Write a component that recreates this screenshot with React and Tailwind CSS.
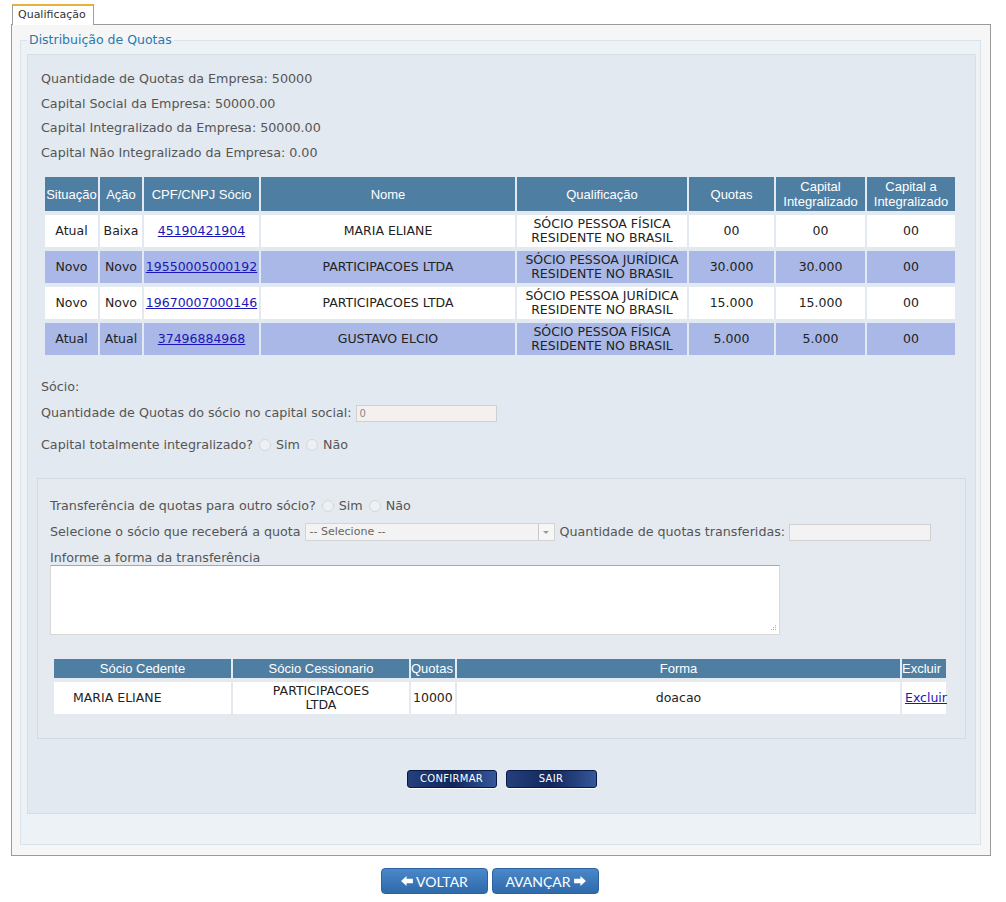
import React from 'react';

const socios = [
  { sit: 'Atual', acao: 'Baixa', doc: '45190421904', nome: 'MARIA ELIANE', q1: 'SÓCIO PESSOA FÍSICA', quotas: '00', integ: '00', aInteg: '00' },
  { sit: 'Novo', acao: 'Novo', doc: '19550005000192', nome: 'PARTICIPACOES LTDA', q1: 'SÓCIO PESSOA JURÍDICA', quotas: '30.000', integ: '30.000', aInteg: '00' },
  { sit: 'Novo', acao: 'Novo', doc: '19670007000146', nome: 'PARTICIPACOES LTDA', q1: 'SÓCIO PESSOA JURÍDICA', quotas: '15.000', integ: '15.000', aInteg: '00' },
  { sit: 'Atual', acao: 'Atual', doc: '37496884968', nome: 'GUSTAVO ELCIO', q1: 'SÓCIO PESSOA FÍSICA', quotas: '5.000', integ: '5.000', aInteg: '00' },
];

const Radio = ({ label }) => (
  <span className="inline-flex items-center ml-[6px]">
    <span className="w-[12px] h-[12px] rounded-full border border-[#d3d8dc] bg-[#eef1f3] mr-[5px]" />
    {label}
  </span>
);

const ArrowLeft = () => (
  <svg width="12" height="10" viewBox="0 0 13 11" className="mr-[3px]">
    <polygon points="0,5.5 6,0 6,3 13,3 13,8 6,8 6,11" fill="#fff" />
  </svg>
);

const ArrowRight = () => (
  <svg width="12" height="10" viewBox="0 0 13 11" className="ml-[3px]">
    <polygon points="13,5.5 7,0 7,3 0,3 0,8 7,8 7,11" fill="#fff" />
  </svg>
);

const th = "bg-[#4f7ea3] text-white font-normal font-['Liberation_Sans',Arial,sans-serif] text-[13px] leading-[15px] text-center px-[1px]";
const td = "text-[12.5px] text-[#222] text-center leading-[14px]";

export default function App() {
  return (
    <div className="w-[1006px] h-[902px] bg-white font-['DejaVu_Sans',Verdana,sans-serif] text-[#555] text-[12.7px] pt-[4px]">
      {/* Tab */}
      <div className="ml-[12px] w-[82px] h-[21px] border-t-2 border-t-[#e8b23a] border-x border-x-[#a0a0a0] bg-white text-[11px] text-[#333] leading-[18px] pl-[5px] relative z-10 -mb-[1px]">
        Qualificação
      </div>

      {/* Panel */}
      <div className="ml-[11px] w-[980px] border border-[#9a9a9a] bg-[#f6f6f6] pt-[7px] pl-[8px] pr-[9px] pb-[10px]">
        <fieldset className="border border-[#dbe3ea] bg-[#edf2f6] pl-[6px] pr-[4px] pt-[6px] pb-[30px]">
          <legend className="px-[2px] text-[12.5px] text-[#2a78ad] leading-[16px]">Distribuição de Quotas</legend>

          {/* Inner box */}
          <div className="bg-[#e2e9f0] border border-[#d6dee6] px-[13px] pt-[12px] pb-[25px]">
            <div className="leading-[24.5px]">
              <div>Quantidade de Quotas da Empresa: 50000</div>
              <div>Capital Social da Empresa: 50000.00</div>
              <div>Capital Integralizado da Empresa: 50000.00</div>
              <div>Capital Não Integralizado da Empresa: 0.00</div>
            </div>

            <table className="mt-[8px] ml-[2px] w-[914px] table-fixed border-separate border-spacing-x-[2px] border-spacing-y-[4px]">
              <colgroup>
                <col className="w-[53px]" />
                <col className="w-[42px]" />
                <col className="w-[115px]" />
                <col className="w-[254px]" />
                <col className="w-[170px]" />
                <col className="w-[85px]" />
                <col className="w-[89px]" />
                <col className="w-[88px]" />
              </colgroup>
              <thead>
                <tr className="h-[34px]">
                  <th className={th}>Situação</th>
                  <th className={th}>Ação</th>
                  <th className={th}>CPF/CNPJ Sócio</th>
                  <th className={th}>Nome</th>
                  <th className={th}>Qualificação</th>
                  <th className={th}>Quotas</th>
                  <th className={th}>Capital Integralizado</th>
                  <th className={th}>Capital a Integralizado</th>
                </tr>
              </thead>
              <tbody>
                {socios.map((s, i) => (
                  <tr key={i} className={`h-[32px] ${i % 2 === 1 ? 'bg-[#a9b8e6]' : 'bg-white'}`}>
                    <td className={td}>{s.sit}</td>
                    <td className={td}>{s.acao}</td>
                    <td className={td}>
                      <a href="#" className="text-[#1c16b8] underline">{s.doc}</a>
                    </td>
                    <td className={td}>{s.nome}</td>
                    <td className={td}>{s.q1}<br />RESIDENTE NO BRASIL</td>
                    <td className={td}>{s.quotas}</td>
                    <td className={td}>{s.integ}</td>
                    <td className={td}>{s.aInteg}</td>
                  </tr>
                ))}
              </tbody>
            </table>

            {/* Sócio */}
            <div className="mt-[16px] leading-[24px]">Sócio:</div>
            <div className="mt-[2px] h-[24px] flex items-center">
              Quantidade de Quotas do sócio no capital social:
              <span className="ml-[4px] w-[141px] h-[17px] border border-[#d0d0d0] bg-[#f5f0f0] text-[10px] text-[#888] leading-[15px] pl-[3px]">0</span>
            </div>
            <div className="mt-[8px] h-[24px] flex items-center">
              Capital totalmente integralizado?
              <Radio label="Sim" />
              <Radio label="Não" />
            </div>

            {/* Transferência */}
            <div className="mt-[21px] -mx-[4px] border border-[#d2dbe3] bg-[#e4eaf0] pl-[12px] pt-[15px] pb-[20px]">
              <div className="h-[24px] flex items-center">
                Transferência de quotas para outro sócio?
                <Radio label="Sim" />
                <Radio label="Não" />
              </div>
              <div className="mt-[2px] h-[24px] flex items-center">
                Selecione o sócio que receberá a quota
                <span className="ml-[4px] w-[250px] h-[18px] border border-[#d4d4d4] bg-[#f3f3f3] flex items-center justify-between">
                  <span className="text-[11px] text-[#666] pl-[4px]">-- Selecione --</span>
                  <span className="w-[16px] h-[16px] border-l border-[#c8c8c8] bg-[#f6f6f6] flex items-center justify-center">
                    <span className="w-0 h-0 border-l-[3px] border-r-[3px] border-t-[3px] border-l-transparent border-r-transparent border-t-[#999]" />
                  </span>
                </span>
                <span className="ml-[5px]">Quantidade de quotas transferidas:</span>
                <span className="ml-[4px] w-[142px] h-[17px] border border-[#d0d0d0] bg-[#f3f3f3]" />
              </div>
              <div className="mt-[6px] leading-[15px]">Informe a forma da transferência</div>
              <div className="relative w-[730px] h-[70px] bg-white border border-[#d8d8d8] border-t-[#a8a8a8]">
                <svg width="8" height="8" viewBox="0 0 8 8" className="absolute right-[2px] bottom-[2px]">
                  <g fill="#b0b0b0">
                    <rect x="6" y="1" width="1" height="1" />
                    <rect x="4" y="3" width="1" height="1" />
                    <rect x="6" y="3" width="1" height="1" />
                    <rect x="2" y="5" width="1" height="1" />
                    <rect x="4" y="5" width="1" height="1" />
                    <rect x="6" y="5" width="1" height="1" />
                  </g>
                </svg>
              </div>

              <table className="mt-[20px] ml-[2px] w-[896px] table-fixed border-separate border-spacing-x-[2px] border-spacing-y-[4px]">
                <colgroup>
                  <col className="w-[177px]" />
                  <col className="w-[176px]" />
                  <col className="w-[44px]" />
                  <col className="w-[443px]" />
                  <col className="w-[44px]" />
                </colgroup>
                <thead>
                  <tr className="h-[19px]">
                    <th className={th}>Sócio Cedente</th>
                    <th className={th}>Sócio Cessionario</th>
                    <th className={`${th} !px-0 text-left`}>Quotas</th>
                    <th className={th}>Forma</th>
                    <th className={`${th} !px-0 text-left pl-[2px]`}>Excluir</th>
                  </tr>
                </thead>
                <tbody>
                  <tr className="h-[32px] bg-white">
                    <td className={`${td} text-left pl-[19px]`}>MARIA ELIANE</td>
                    <td className={td}>PARTICIPACOES<br />LTDA</td>
                    <td className={`${td} text-left pl-[2px]`}>10000</td>
                    <td className={td}>doacao</td>
                    <td className={`${td} text-left pl-[3px]`}>
                      <a href="#" className="text-[#1c16b8] underline">Excluir</a>
                    </td>
                  </tr>
                </tbody>
              </table>
            </div>

            {/* Ações */}
            <div className="mt-[31px] flex justify-center gap-[9px]">
              <button className="w-[90px] h-[18px] rounded-[3px] border border-[#0a1a44] bg-gradient-to-r from-[#24407c] via-[#12275c] to-[#35589a] text-white text-[10px] leading-[16px] tracking-[0.3px] shadow-[0_1px_0_#fff]">
                CONFIRMAR
              </button>
              <button className="w-[91px] h-[18px] rounded-[3px] border border-[#0a1a44] bg-gradient-to-r from-[#24407c] via-[#12275c] to-[#35589a] text-white text-[10px] leading-[16px] tracking-[0.3px] shadow-[0_1px_0_#fff]">
                SAIR
              </button>
            </div>
          </div>
        </fieldset>
      </div>

      {/* Navegação */}
      <div className="mt-[12px] pl-[381px] flex gap-[4px]">
        <button className="w-[107px] h-[26px] rounded-[4px] border border-[#2c62a0] bg-gradient-to-b from-[#4a88c9] to-[#2f6aab] text-white text-[14px] font-['Lato',sans-serif] flex items-center justify-center">
          <ArrowLeft />VOLTAR
        </button>
        <button className="w-[107px] h-[26px] rounded-[4px] border border-[#2c62a0] bg-gradient-to-b from-[#4a88c9] to-[#2f6aab] text-white text-[14px] font-['Lato',sans-serif] flex items-center justify-center">
          AVANÇAR<ArrowRight />
        </button>
      </div>
    </div>
  );
}
